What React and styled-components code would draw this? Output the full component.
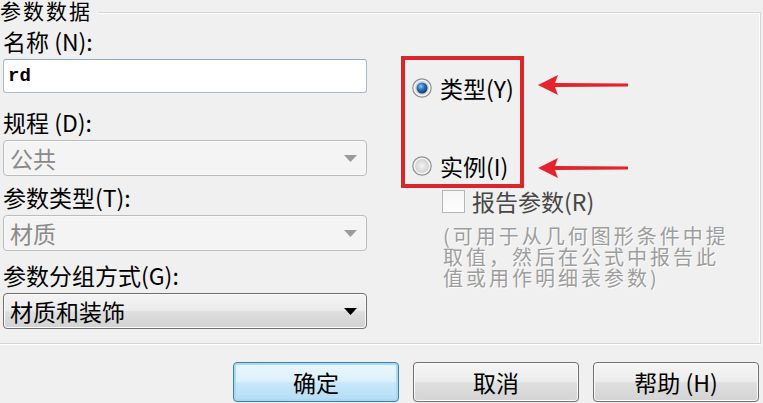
import React from 'react'
import styled, { createGlobalStyle } from 'styled-components'

const GlobalStyle = createGlobalStyle`
  html, body {
    margin: 0;
    padding: 0;
    background: #f0f0f0;
    overflow: hidden;
  }
  body {
    font-family: "Noto Sans CJK SC", "Noto Sans", sans-serif;
    color: #000;
  }
`

const Page = styled.div`
  width: 763px;
  height: 403px;
  display: flex;
  flex-direction: column;
  background: #f0f0f0;
`

const Group = styled.div`
  margin: 12px 2px 0 0;
  border-top: 1px solid #d5d5d5;
  border-right: 1px solid #d5d5d5;
  border-bottom: 1px solid #d5d5d5;
  box-shadow: 0 1px 0 #ffffff, inset 0 1px 0 #ffffff, inset -1px 0 0 #ffffff;
  display: flex;
  flex-direction: column;
`

const Legend = styled.div`
  align-self: flex-start;
  margin-top: -13px;
  padding-right: 6px;
  height: 21px;
  line-height: 21px;
  font-size: 21px;
  letter-spacing: 2px;
  background: #f0f0f0;
`

const Body = styled.div`
  display: flex;
  padding: 6px 0 14px 3px;
`

const LeftCol = styled.div`
  width: 364px;
  display: flex;
  flex-direction: column;
`

const Field = styled.div`
  margin-top: ${p => p.$gap || 0}px;
  display: flex;
  flex-direction: column;
`

const Label = styled.div`
  height: 28px;
  line-height: 28px;
  font-size: 23px;
  white-space: nowrap;
  margin-bottom: 4px;
`

const TextBox = styled.div`
  height: 32px;
  border: 1px solid #a9bccb;
  border-top-color: #8fa7ba;
  border-radius: 3px;
  background: #ffffff;
  padding-left: 4px;
  display: flex;
  align-items: center;
  font-family: "Liberation Mono", monospace;
  font-size: 19px;
  font-weight: bold;
`

const Combo = styled.div`
  height: 34px;
  border: 1px solid ${p => (p.$disabled ? '#bcbcbc' : '#707070')};
  border-radius: 4px;
  background: ${p =>
    p.$disabled
      ? '#f4f4f4'
      : 'linear-gradient(#f4f4f4 0%, #ececec 48%, #dedede 52%, #d2d2d2 100%)'};
  box-shadow: inset 0 0 0 1px ${p => (p.$disabled ? '#f9f9f9' : '#fbfbfb')};
  color: ${p => (p.$disabled ? '#8a8a8a' : '#000')};
  display: flex;
  align-items: center;
  justify-content: space-between;
  padding: 0 9px 0 6px;
  font-size: 23px;

  svg {
    fill: ${p => (p.$disabled ? '#9b9b9b' : '#000')};
  }
`

const RightCol = styled.div`
  margin-left: 34px;
  padding-top: 29px;
  display: flex;
  flex-direction: column;
`

const Annotated = styled.div`
  display: flex;
  gap: 14px;
`

const RedBox = styled.div`
  box-sizing: border-box;
  width: 123px;
  height: 132px;
  border: 4px solid #d9252c;
  padding: 16px 0 6px 7px;
  display: flex;
  flex-direction: column;
  justify-content: space-between;
`

const Radio = styled.div`
  height: 24px;
  display: flex;
  align-items: center;
  gap: 8px;
  font-size: 23px;
  white-space: nowrap;
`

const Arrows = styled.div`
  display: flex;
  flex-direction: column;
  justify-content: space-between;
  padding: 18px 0 9px;
`

const CheckRow = styled.div`
  margin: 1px 0 0 41px;
  height: 24px;
  display: flex;
  align-items: center;
  gap: 7px;
  font-size: 23px;
  color: #474747;
  white-space: nowrap;
`

const CheckBox = styled.div`
  width: 21px;
  height: 21px;
  border: 1px solid #b5b5b5;
  background: linear-gradient(#f6f6f6, #fdfdfd);
`

const Hint = styled.div`
  margin: 12px 0 0 42px;
  font-size: 20px;
  letter-spacing: 3px;
  line-height: 21px;
  color: #9d9d9d;
  text-shadow: 1px 1px 0 #ffffff;
  white-space: nowrap;
`

const ButtonRow = styled.div`
  margin-top: 18px;
  display: flex;
  justify-content: flex-end;
  gap: 14px;
  padding-right: 4px;
`

const Button = styled.div`
  width: 166px;
  height: 40px;
  box-sizing: border-box;
  border-radius: 4px;
  border: 1px solid ${p => (p.$primary ? '#3c7fb1' : '#707070')};
  background: ${p =>
    p.$primary
      ? 'linear-gradient(#eaf6fd 0%, #dcf1fc 48%, #c9e8fa 52%, #b4dcf3 100%)'
      : 'linear-gradient(#f5f5f5 0%, #ececec 48%, #dfdfdf 52%, #d3d3d3 100%)'};
  box-shadow: inset 0 0 0 ${p => (p.$primary ? '2px #a9daf3' : '1px #fcfcfc')};
  display: flex;
  align-items: center;
  justify-content: center;
  font-size: 23px;
`

const DropArrow = () => (
  <svg width="13" height="7" viewBox="0 0 13 7">
    <polygon points="0,0 13,0 6.5,7" />
  </svg>
)

const RadioIcon = ({ checked }) => (
  <svg width="20" height="20" viewBox="0 0 20 20">
    <defs>
      <radialGradient id="rOff" cx="50%" cy="50%" r="50%">
        <stop offset="0%" stopColor="#f4f4f4" />
        <stop offset="100%" stopColor="#d2d2d2" />
      </radialGradient>
      <radialGradient id="rOn" cx="40%" cy="35%" r="70%">
        <stop offset="0%" stopColor="#8cc6f2" />
        <stop offset="45%" stopColor="#2a73c0" />
        <stop offset="100%" stopColor="#0b2f5c" />
      </radialGradient>
    </defs>
    <circle cx="10" cy="10" r="9.2" fill="#f5f5f5" stroke="#8f8f8f" strokeWidth="1.2" />
    <circle cx="10" cy="10" r="7" fill="url(#rOff)" />
    {checked && <circle cx="10" cy="10" r="5.5" fill="url(#rOn)" />}
  </svg>
)

const RedArrow = () => (
  <svg width="90" height="22" viewBox="0 0 90 22">
    <polygon
      points="0,11 20,1 17,9 90,9.6 90,12.4 17,13 20,21"
      fill="#e3242c"
    />
  </svg>
)

const App = () => {
  return (
    <Page>
      <GlobalStyle />
      <Group>
        <Legend>参数数据</Legend>
        <Body>
          <LeftCol>
            <Field>
              <Label>名称 (N):</Label>
              <TextBox>rd</TextBox>
            </Field>
            <Field $gap={15}>
              <Label>规程 (D):</Label>
              <Combo $disabled>
                公共
                <DropArrow />
              </Combo>
            </Field>
            <Field $gap={7}>
              <Label>参数类型(T):</Label>
              <Combo $disabled>
                材质
                <DropArrow />
              </Combo>
            </Field>
            <Field $gap={10}>
              <Label>参数分组方式(G):</Label>
              <Combo>
                材质和装饰
                <DropArrow />
              </Combo>
            </Field>
          </LeftCol>
          <RightCol>
            <Annotated>
              <RedBox>
                <Radio>
                  <RadioIcon checked />
                  类型(Y)
                </Radio>
                <Radio>
                  <RadioIcon />
                  实例(I)
                </Radio>
              </RedBox>
              <Arrows>
                <RedArrow />
                <RedArrow />
              </Arrows>
            </Annotated>
            <CheckRow>
              <CheckBox />
              报告参数(R)
            </CheckRow>
            <Hint>
              (可用于从几何图形条件中提
              <br />
              取值，然后在公式中报告此
              <br />
              值或用作明细表参数)
            </Hint>
          </RightCol>
        </Body>
      </Group>
      <ButtonRow>
        <Button $primary>确定</Button>
        <Button>取消</Button>
        <Button>帮助 (H)</Button>
      </ButtonRow>
    </Page>
  )
}

export default App
